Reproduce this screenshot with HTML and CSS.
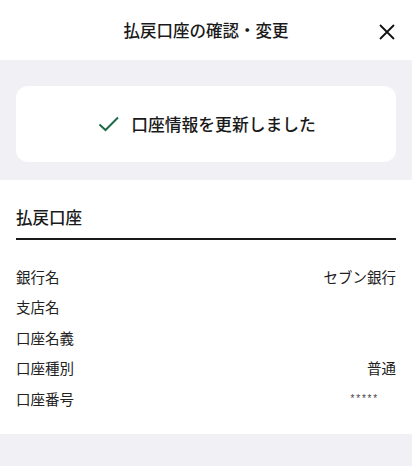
FILE: index.html
```html
<!DOCTYPE html>
<html lang="ja">
<head>
    <meta charset="UTF-8">
    <meta name="viewport" content="width=device-width, initial-scale=1.0">
    <title>払戻口座の確認・変更</title>
    <link rel="stylesheet" href="styles.css">
</head>
<body>
    <div class="header">
        <h1>払戻口座の確認・変更</h1>
        <span class="close-btn">
            <svg width="16" height="16" viewBox="0 0 16 16">
                <path d="M1 1 L15 15 M15 1 L1 15" stroke="#111" stroke-width="1.8" fill="none"/>
            </svg>
        </span>
    </div>
    <div class="notice-area">
        <div class="notice-card">
            <svg class="check" width="22" height="16" viewBox="0 0 22 16">
                <path d="M1.5 8.5 L7.5 14 L20 1.5" stroke="#1e6b48" stroke-width="2" fill="none"/>
            </svg>
            <span>口座情報を更新しました</span>
        </div>
    </div>
    <div class="account-section">
        <h2>払戻口座</h2>
        <div class="info-list">
            <div class="info-row"><span>銀行名</span><span>セブン銀行</span></div>
            <div class="info-row"><span>支店名</span><span></span></div>
            <div class="info-row"><span>口座名義</span><span></span></div>
            <div class="info-row"><span>口座種別</span><span>普通</span></div>
            <div class="info-row"><span>口座番号</span><span class="masked">*****</span></div>
        </div>
    </div>
    <div class="footer-space"></div>
</body>
</html>
```

FILE: styles.css
```css
* {
    margin: 0;
    padding: 0;
    box-sizing: border-box;
}
body {
    font-family: "Noto Sans CJK JP", "Noto Sans", sans-serif;
    background: #f0f0f5;
    color: #1a1a1a;
}
.header {
    height: 60px;
    background: white;
    display: flex;
    justify-content: center;
    align-items: center;
    position: relative;
}
.header h1 {
    font-size: 16.5px;
    font-weight: 500;
}
.close-btn {
    position: absolute;
    right: 17px;
    top: 24px;
    display: flex;
}
.notice-area {
    padding: 26px 16px 18px;
}
.notice-card {
    height: 76px;
    background: white;
    border-radius: 12px;
    display: flex;
    justify-content: center;
    align-items: center;
    gap: 11px;
    font-size: 16.8px;
    font-weight: 500;
}
.check {
    margin-left: 2px;
}
.account-section {
    background: white;
    padding: 25px 16px 20px;
}
.account-section h2 {
    font-size: 16.5px;
    font-weight: 500;
    line-height: 24px;
    padding-bottom: 9px;
    border-bottom: 2px solid #1a1a1a;
}
.info-list {
    padding-top: 21px;
}
.info-row {
    display: flex;
    justify-content: space-between;
    align-items: center;
    height: 30.5px;
    font-size: 14.5px;
    color: #222;
}
.masked {
    font-family: "Liberation Sans", sans-serif;
    font-size: 10px;
    padding-right: 17px;
    letter-spacing: 1.8px;
    color: #444;
}
.footer-space {
    height: 32px;
}
```
